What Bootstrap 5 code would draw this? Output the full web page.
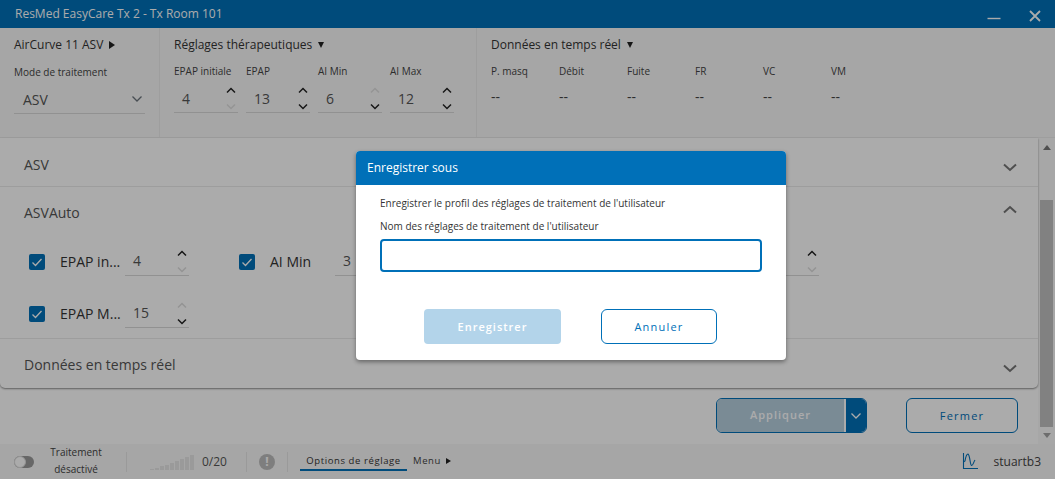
<!DOCTYPE html>
<html lang="fr"><head><meta charset="utf-8"><title>ResMed EasyCare Tx</title>
<link href="https://cdn.jsdelivr.net/npm/bootstrap@5.3.0/dist/css/bootstrap.min.css" rel="stylesheet">
<style>
html,body{height:100%;overflow:hidden;}
body{font-family:"Open Sans","Liberation Sans",sans-serif;color:#333;background:#fff;font-size:14px;}
.app-shell{height:479px;position:relative;}
.title-bar{height:28px;background:#0070b8;color:#fff;font-size:12px;padding:0 12px 0 15px;}
.win-btn{width:16px;height:16px;display:block;}
.top-panel{height:110px;background:#f8f8f8;border-bottom:1px solid #ececec;}
.pane{padding:9px 0 0 14px;border-right:1px solid #ececec;}
.pane-device{width:160px;}
.pane-therapy{width:317px;}
.pane-live{flex:1;border-right:0;}
.pane-title{font-size:12px;line-height:16px;color:#333;height:25px;}
.tri-r,.tri-d{display:inline-block;width:0;height:0;border-style:solid;border-color:transparent;margin-left:3px;}
.tri-r{border-width:4px 0 4px 6px;border-left-color:#222;vertical-align:0;}
.tri-d{border-width:6px 3.500px 0;border-top-color:#222;vertical-align:1px;}
.head-gap{margin-top:2px;}
.mini-label{font-size:10px;line-height:14px;color:#444;height:14px;}
.mode-label{margin-top:3px;}
.mode-select{width:131px;height:29px;margin-top:6px;border-bottom:1px solid #d8d8d8;padding:0 1px 0 9px;font-size:14px;color:#555;}
.spin-row{gap:8px;}
.spin-col{width:64px;}
.spinner-box{width:64px;height:29px;border-bottom:1px solid #d8d8d8;padding-left:8px;font-size:14px;color:#555;position:relative;margin-top:6px;}
.spin-ar{position:absolute;right:0;top:-2px;width:14px;height:30px;}
.live-col{width:68px;}
.live-val{font-size:14px;margin-top:11px;color:#444;line-height:16px;}
.scroll-zone{height:306px;background:#fff;}
.scroll-main{width:1038px;}
.scroll-rail{width:17px;background:#f9f9f9;padding:7px 2px 0;}
.scroll-thumb{height:227px;background:#c1c1c1;margin-top:50px;}
.rail-up{width:0;height:0;border-left:4px solid transparent;border-right:4px solid transparent;border-bottom:5px solid #777;margin:0 auto;}
.rail-ar{width:0;height:0;border-left:4px solid transparent;border-right:4px solid transparent;border-top:5px solid #a3a3a3;margin:6px auto 0;}
.acc-card{border:0;border-radius:0 0 5px 5px;box-shadow:0 1px 2px rgba(0,0,0,.45);background:#fff;--bs-card-bg:#fff;}
.acc-head{height:49px;padding:4px 21px 0 24px;font-size:14px;color:#555;border-bottom:1px solid #eaeaea;}
.acc-head.open-head{height:48px;border-bottom:0;padding-top:3px;}
.acc-head.acc-last{border-bottom:0;padding-top:2px;}
.chev{width:14px;height:9px;color:#777;}
.chev-low{margin-top:7px;}
.chev-high{margin-bottom:7px;}
.acc-body{padding:0 0 0 29px;height:104px;border-bottom:1px solid #eaeaea;}
.set-row{height:52px;}
.set-item{width:210px;padding-top:1px;}
.tick{width:16px;height:16px;background:#0070b8;border-radius:2px;flex:none;}
.set-label{padding-left:15px;font-size:14px;white-space:nowrap;color:#333;flex:none;width:80px;margin-right:16px;}
.spinner-box.acc-spin{margin-top:-1px;width:64px;flex:none;margin-left:-16px;}
.action-row{padding:10px 20px 0 0;gap:39px;}
.apply-group{width:151px;height:35px;border:1px solid #0070b8;border-radius:6px;overflow:hidden;}
.apply-main{width:129px;background:#b6cfdf;color:#fff;font-size:11px;letter-spacing:1px;font-weight:600;border-right:2px solid #fff;}
.apply-caret{flex:1;background:#0070b8;}
.close-btn{width:112px;height:35px;border:1px solid #0070b8;border-radius:6px;color:#0070b8;font-size:11px;letter-spacing:1.2px;padding:1px 0 0;background:#fff;--bs-btn-hover-bg:#fff;}
.foot-bar{height:35px;background:#f8f8f8;font-size:11px;color:#444;position:relative;}
.sw-track{width:20px;height:12px;border-radius:6px;background:#9a9a9a;position:relative;margin-left:14px;}
.sw-knob{position:absolute;left:0;top:0;width:12px;height:12px;border-radius:50%;background:#fff;border:1px solid #ddd;}
.tx-state{width:84px;margin-right:8px;text-align:center;font-size:10px;line-height:17px;margin-top:-2px;}
.v-sep{width:1px;height:20px;background:#e6e6e6;}
.sig-bars{gap:1px;margin-left:23px;width:46px;height:16px;}
.sig-bars i{display:block;width:4px;background:#e6e6e6;}
.count-txt{font-size:12px;margin-left:6px;width:44px;color:#555;}
.warn-dot{width:16px;height:16px;border-radius:50%;background:#bdbdbd;color:#fff;font-size:12px;font-weight:700;line-height:16px;text-align:center;margin:0 12px;}
.tab-on{margin-left:12px;width:107px;height:28px;line-height:16px;padding-top:10px;text-align:center;font-size:9.5px;letter-spacing:.6px;border-bottom:2px solid #0070b8;align-self:flex-end;margin-bottom:8px;color:#333;}
.menu-txt{font-size:9.5px;letter-spacing:.6px;margin-left:6px;}
.menu-txt .tri-r{border-width:3.500px 0 3.500px 5px;margin-left:2px;}
.chart-ic{width:16px;height:17px;margin-top:-1px;}
.user-txt{font-size:12px;margin:0 14px 0 16px;}
.veil{position:absolute;inset:0;background:rgba(0,0,0,.33);}
.dialog-box{position:absolute;left:356px;top:151px;width:430px;height:209px;background:#fff;border:0;border-radius:4px;box-shadow:0 2px 4px rgba(0,0,0,.4);overflow:hidden;}
.dialog-head{height:34px;background:#0070b8;color:#fff;font-size:12px;padding:0 11px;border:0;border-radius:0;}
.dialog-body{padding:10px 24px 0;font-size:10px;color:#333;}
.dialog-line{line-height:16px;margin-bottom:7px;}
.dialog-input{height:33px;border:2px solid #0070b8;border-radius:4px;margin-top:5px;box-shadow:none;width:382px;}
.dialog-foot{gap:40px;padding:37px 0 0 68px;}
.save-btn{width:137px;height:35px;background:#b3d4ea;border:0;color:#fff;font-size:11px;letter-spacing:1px;font-weight:600;border-radius:4px;padding:1px 0 0;}
.cancel-btn{width:116px;height:35px;border:1px solid #0070b8;background:#fff;color:#0070b8;font-size:11px;letter-spacing:1.2px;border-radius:6px;padding:1px 0 0;}
</style></head><body>
<svg width="0" height="0" class="d-block position-absolute"><defs>
<symbol id="up" viewBox="0 0 14 9"><path d="M1 7.500 7 2l6 5.500" fill="none" stroke="currentColor" stroke-width="2"/></symbol>
<symbol id="down" viewBox="0 0 14 9"><path d="M1 1.500 7 7l6-5.500" fill="none" stroke="currentColor" stroke-width="2"/></symbol>
<symbol id="small-down" viewBox="0 0 14 8"><path d="M2.500 1.500 7 6l4.500-4.500" fill="none" stroke="currentColor" stroke-width="1.300"/></symbol>
<symbol id="spinA" viewBox="0 0 14 30"><path d="M3 10.500 7 6.500l4 4" fill="none" stroke="#222" stroke-width="1.500"/><path d="M3 22.500l4 4 4-4" fill="none" stroke="#222" stroke-width="1.500"/></symbol>
<symbol id="spinUp" viewBox="0 0 14 30"><path d="M3 10.500 7 6.500l4 4" fill="none" stroke="#222" stroke-width="1.500"/><path d="M3 22.500l4 4 4-4" fill="none" stroke="#ddd" stroke-width="1.500"/></symbol>
<symbol id="spinDn" viewBox="0 0 14 30"><path d="M3 10.500 7 6.500l4 4" fill="none" stroke="#ddd" stroke-width="1.500"/><path d="M3 22.500l4 4 4-4" fill="none" stroke="#222" stroke-width="1.500"/></symbol>
<symbol id="check" viewBox="0 0 16 16"><path d="M3.500 8.500 6.500 11.500 12.500 5" fill="none" stroke="#fff" stroke-width="1.300"/></symbol>
</defs></svg>
<div class="app-shell d-flex flex-column">
  <div class="title-bar d-flex align-items-center justify-content-between">
    <span>ResMed EasyCare Tx 2 - Tx Room 101</span>
    <span class="d-flex align-items-center gap-4">
      <svg class="win-btn" viewBox="0 0 16 16"><path d="M.5 12.500h13" stroke="#fff" stroke-width="1.400"/></svg>
      <svg class="win-btn" viewBox="0 0 16 16"><path d="M3 5l10 10M13 5 3 15" stroke="#fff" stroke-width="1.800"/></svg>
    </span>
  </div>
  <div class="top-panel d-flex">
    <div class="pane pane-device">
      <div class="pane-title">AirCurve 11 ASV <span class="tri-r"></span></div>
      <div class="mini-label mode-label">Mode de traitement</div>
      <div class="mode-select d-flex align-items-center justify-content-between"><span>ASV</span><svg width="14" height="8" class="text-secondary"><use href="#small-down"/></svg></div>
    </div>
    <div class="pane pane-therapy">
      <div class="pane-title">Réglages thérapeutiques <span class="tri-d"></span></div>
      <div class="d-flex spin-row head-gap">
        <div class="spin-col"><div class="mini-label">EPAP initiale</div><div class="spinner-box d-flex align-items-center">4<svg class="spin-ar"><use href="#spinUp"/></svg></div></div>
        <div class="spin-col"><div class="mini-label">EPAP</div><div class="spinner-box d-flex align-items-center">13<svg class="spin-ar"><use href="#spinA"/></svg></div></div>
        <div class="spin-col"><div class="mini-label">AI Min</div><div class="spinner-box d-flex align-items-center">6<svg class="spin-ar"><use href="#spinDn"/></svg></div></div>
        <div class="spin-col"><div class="mini-label">AI Max</div><div class="spinner-box d-flex align-items-center">12<svg class="spin-ar"><use href="#spinA"/></svg></div></div>
      </div>
    </div>
    <div class="pane pane-live">
      <div class="pane-title">Données en temps réel <span class="tri-d"></span></div>
      <div class="d-flex head-gap">
        <div class="live-col"><div class="mini-label">P. masq</div><div class="live-val">--</div></div>
        <div class="live-col"><div class="mini-label">Débit</div><div class="live-val">--</div></div>
        <div class="live-col"><div class="mini-label">Fuite</div><div class="live-val">--</div></div>
        <div class="live-col"><div class="mini-label">FR</div><div class="live-val">--</div></div>
        <div class="live-col"><div class="mini-label">VC</div><div class="live-val">--</div></div>
        <div class="live-col"><div class="mini-label">VM</div><div class="live-val">--</div></div>
      </div>
    </div>
  </div>
  <div class="scroll-zone d-flex">
    <div class="scroll-main">
      <div class="card acc-card">
        <div class="acc-head d-flex align-items-center justify-content-between"><span>ASV</span><svg class="chev chev-low"><use href="#down"/></svg></div>
        <div class="acc-head open-head d-flex align-items-center justify-content-between"><span>ASVAuto</span><svg class="chev chev-high"><use href="#up"/></svg></div>
        <div class="acc-body">
          <div class="set-row d-flex">
            <div class="set-item d-flex align-items-center"><span class="tick"><svg width="16" height="16" class="d-block"><use href="#check"/></svg></span><span class="set-label">EPAP in...</span><div class="spinner-box acc-spin d-flex align-items-center">4<svg class="spin-ar"><use href="#spinUp"/></svg></div></div>
            <div class="set-item d-flex align-items-center"><span class="tick"><svg width="16" height="16" class="d-block"><use href="#check"/></svg></span><span class="set-label">AI Min</span><div class="spinner-box acc-spin d-flex align-items-center">3<svg class="spin-ar"><use href="#spinUp"/></svg></div></div>
            <div class="set-item d-flex align-items-center"><span class="tick"><svg width="16" height="16" class="d-block"><use href="#check"/></svg></span><span class="set-label">AI Max</span><div class="spinner-box acc-spin d-flex align-items-center">12<svg class="spin-ar"><use href="#spinUp"/></svg></div></div>
            <div class="set-item d-flex align-items-center"><span class="tick"><svg width="16" height="16" class="d-block"><use href="#check"/></svg></span><span class="set-label">Fréq...</span><div class="spinner-box acc-spin d-flex align-items-center">15<svg class="spin-ar"><use href="#spinUp"/></svg></div></div>
          </div>
          <div class="set-row d-flex">
            <div class="set-item d-flex align-items-center"><span class="tick"><svg width="16" height="16" class="d-block"><use href="#check"/></svg></span><span class="set-label">EPAP M...</span><div class="spinner-box acc-spin d-flex align-items-center">15<svg class="spin-ar"><use href="#spinDn"/></svg></div></div>
          </div>
        </div>
        <div class="acc-head acc-last d-flex align-items-center justify-content-between"><span>Données en temps réel</span><svg class="chev chev-low"><use href="#down"/></svg></div>
      </div>
      <div class="action-row d-flex justify-content-end">
        <div class="apply-group d-flex">
          <div class="apply-main d-flex align-items-center justify-content-center">Appliquer</div>
          <div class="apply-caret d-flex align-items-center justify-content-center"><svg width="14" height="8" class="text-white"><use href="#small-down"/></svg></div>
        </div>
        <button type="button" class="btn close-btn">Fermer</button>
      </div>
    </div>
    <div class="scroll-rail"><div class="rail-up"></div><div class="scroll-thumb"></div><div class="rail-ar"></div></div>
  </div>
  <div class="foot-bar d-flex align-items-center">
    <div class="sw-track"><div class="sw-knob"></div></div>
    <div class="tx-state">Traitement<br>désactivé</div>
    <div class="v-sep"></div>
    <div class="sig-bars d-flex align-items-end">
      <i style="height:1px"></i><i style="height:2px"></i><i style="height:4px"></i><i style="height:5px"></i><i style="height:7px"></i><i style="height:9px"></i><i style="height:11px"></i><i style="height:13px"></i><i style="height:15px"></i>
    </div>
    <div class="count-txt">0/20</div>
    <div class="v-sep"></div>
    <div class="warn-dot">!</div>
    <div class="v-sep"></div>
    <div class="tab-on">Options de réglage</div>
    <div class="menu-txt">Menu <span class="tri-r"></span></div>
    <svg viewBox="0 0 16 17" class="chart-ic ms-auto"><path d="M1.500 0v15.500H16M1.500 9 3 8C4 2 5 1 6 1c2 1 2 11 3.500 11.500C11 13 11.500 9 13 7" fill="none" stroke="#0070b8" stroke-width="1.100"/></svg>
    <div class="user-txt">stuartb3</div>
  </div>
  <div class="veil"></div>
  <div class="dialog-box">
    <div class="dialog-head d-flex align-items-center">Enregistrer sous</div>
    <div class="dialog-body">
      <div class="dialog-line">Enregistrer le profil des réglages de traitement de l'utilisateur</div>
      <div class="dialog-line mb-0">Nom des réglages de traitement de l'utilisateur</div>
      <input type="text" class="form-control dialog-input" aria-label="Nom">
    </div>
    <div class="dialog-foot d-flex">
      <button type="button" class="btn save-btn">Enregistrer</button>
      <button type="button" class="btn cancel-btn">Annuler</button>
    </div>
  </div>
</div>
<script src="https://cdn.jsdelivr.net/npm/bootstrap@5.3.0/dist/js/bootstrap.bundle.min.js"></script>
</body></html>
